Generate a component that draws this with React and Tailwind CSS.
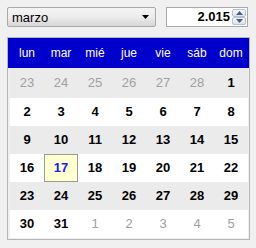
import React from 'react';

const dias = ['lun', 'mar', 'mié', 'jue', 'vie', 'sáb', 'dom'];

// semanas de marzo 2015: [numero, es del mes]
const semanas = [
  [[23, false], [24, false], [25, false], [26, false], [27, false], [28, false], [1, true]],
  [[2, true], [3, true], [4, true], [5, true], [6, true], [7, true], [8, true]],
  [[9, true], [10, true], [11, true], [12, true], [13, true], [14, true], [15, true]],
  [[16, true], [17, true], [18, true], [19, true], [20, true], [21, true], [22, true]],
  [[23, true], [24, true], [25, true], [26, true], [27, true], [28, true], [29, true]],
  [[30, true], [31, true], [1, false], [2, false], [3, false], [4, false], [5, false]],
];

function SpinButton({ up }) {
  return (
    <div className="flex-1 flex items-center justify-center border border-[#b7c0cf] rounded-[2px] bg-gradient-to-b from-[#f6f8fb] to-[#dde3ec]">
      <svg width="7" height="4" viewBox="0 0 7 4">
        {up ? <path d="M0 4 L3.5 0 L7 4 Z" fill="#4b5e82" /> : <path d="M0 0 L3.5 4 L7 0 Z" fill="#4b5e82" />}
      </svg>
    </div>
  );
}

export default function App() {
  return (
    <div className="w-[256px] h-[248px] bg-[#f0f0f0] font-['Liberation_Sans',Arial,sans-serif] overflow-hidden">
      {/* Mes y año */}
      <div className="flex pt-[7px] pl-[7px]">
        <div className="w-[149px] h-[20px] border border-[#a9a9a9] rounded-[2px] bg-gradient-to-b from-[#f4f4f4] via-[#ececec] to-[#d6d6d6] flex items-center justify-between pl-[4px] pr-[6px]">
          <span className="text-[13px] text-black leading-none">marzo</span>
          <svg width="7" height="4" viewBox="0 0 7 4">
            <path d="M0 0 L7 0 L3.5 4 Z" fill="#000" />
          </svg>
        </div>
        <div className="ml-[10px] w-[82px] h-[20px] border border-[#a9a9a9] bg-white flex items-stretch pr-[1px] py-[1px]">
          <span className="flex-1 text-right text-[13px] font-bold leading-[16px] pr-[2px] text-black">2.015</span>
          <div className="w-[14px] flex flex-col">
            <SpinButton up />
            <SpinButton />
          </div>
        </div>
      </div>

      {/* Calendario */}
      <div className="mt-[10px] ml-[7px] w-[243px] border border-[#b5b5b5] pb-[1px]">
        <div className="h-[30px] bg-[#0000cd] grid grid-cols-7 pl-[2px] pr-[1px]">
          {dias.map((d) => (
            <div key={d} className="flex items-center justify-center text-white text-[12px]">
              {d}
            </div>
          ))}
        </div>
        <div className="pl-[2px] pr-[1px]">
          {semanas.map((semana, i) => (
            <div
              key={i}
              className={`grid grid-cols-7 ${i === 0 ? 'h-[30px]' : 'h-[28px]'} ${i % 2 === 0 ? 'bg-[#ebebeb]' : 'bg-white'}`}
            >
              {semana.map(([n, mes], j) => {
                const hoy = mes && n === 17;
                return (
                  <div
                    key={j}
                    className={`flex items-center justify-center text-[13px] ${
                      hoy
                        ? 'bg-[#ffffd0] border border-[#9a9a9a] text-[#1a1aff] font-bold'
                        : mes
                        ? 'text-black font-bold'
                        : 'text-[#a0a0a0]'
                    }`}
                  >
                    {n}
                  </div>
                );
              })}
            </div>
          ))}
        </div>
      </div>
    </div>
  );
}
